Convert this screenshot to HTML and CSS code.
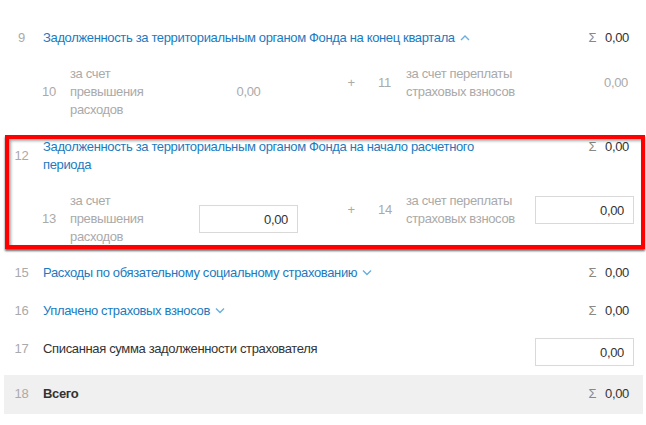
FILE: index.html
```html
<!DOCTYPE html>
<html lang="ru">
<head>
<meta charset="utf-8">
<title>Форма</title>
<link rel="stylesheet" href="styles.css">
</head>
<body>
<div class="form">
  <div class="row">
    <div class="num">9</div>
    <div class="label"><a class="link">Задолженность за территориальным органом Фонда на конец квартала<svg class="chev" width="10" height="7" viewBox="0 0 10 7"><path d="M1 6 L5 2 L9 6" fill="none" stroke="#6aaee0" stroke-width="1.4"/></svg></a></div>
    <div class="sum"><span class="sigma">Σ</span>0,00</div>
  </div>
  <div class="subrow">
    <div class="half">
      <div class="snum">10</div>
      <div class="slabel">за счет превышения расходов</div>
      <div class="val val-center">0,00</div>
    </div>
    <div class="half half-right">
      <div class="plus">+</div>
      <div class="snum">11</div>
      <div class="slabel">за счет переплаты страховых взносов</div>
      <div class="val val-right">0,00</div>
    </div>
  </div>

  <div class="marked">
    <div class="row row-top">
      <div class="num">12</div>
      <div class="label"><a class="link">Задолженность за территориальным органом Фонда на начало расчетного периода</a></div>
      <div class="sum"><span class="sigma">Σ</span>0,00</div>
    </div>
    <div class="subrow subrow-last">
      <div class="half">
        <div class="snum">13</div>
        <div class="slabel">за счет превышения расходов</div>
        <input class="field" type="text" value="0,00">
      </div>
      <div class="half half-right">
        <div class="plus">+</div>
        <div class="snum">14</div>
        <div class="slabel">за счет переплаты страховых взносов</div>
        <input class="field" type="text" value="0,00">
      </div>
    </div>
  </div>

  <div class="row">
    <div class="num">15</div>
    <div class="label"><a class="link">Расходы по обязательному социальному страхованию<svg class="chev" width="10" height="7" viewBox="0 0 10 7"><path d="M1 1.5 L5 5.5 L9 1.5" fill="none" stroke="#6aaee0" stroke-width="1.4"/></svg></a></div>
    <div class="sum"><span class="sigma">Σ</span>0,00</div>
  </div>
  <div class="row">
    <div class="num">16</div>
    <div class="label"><a class="link">Уплачено страховых взносов<svg class="chev" width="10" height="7" viewBox="0 0 10 7"><path d="M1 1.5 L5 5.5 L9 1.5" fill="none" stroke="#6aaee0" stroke-width="1.4"/></svg></a></div>
    <div class="sum"><span class="sigma">Σ</span>0,00</div>
  </div>
  <div class="row row-input">
    <div class="num">17</div>
    <div class="label plain">Списанная сумма задолженности страхователя</div>
    <input class="field field-main" type="text" value="0,00">
  </div>
  <div class="row row-total">
    <div class="num">18</div>
    <div class="label total">Всего</div>
    <div class="sum"><span class="sigma">Σ</span>0,00</div>
  </div>
</div>
</body>
</html>
```

FILE: styles.css
```css
html, body {
  margin: 0;
  padding: 0;
  background: #fff;
}
body {
  font-family: "Liberation Sans", Arial, sans-serif;
  font-size: 13px;
  line-height: 18px;
  letter-spacing: -0.35px;
  color: #333;
}
.form {
  margin: 0 3px 0 4px;
  padding-top: 19px;
}
.row {
  display: flex;
  align-items: flex-start;
  padding: 10px 9px 10px 0;
}
.num {
  width: 35px;
  flex: none;
  text-align: center;
  color: #aaa;
  margin-right: 4px;
}
.row-top .num {
  align-self: center;
}
.label {
  flex: 1;
  min-width: 0;
  padding-right: 40px;
}
.link {
  color: #1a7bc1;
  text-decoration: none;
}
.chev {
  margin-left: 5px;
  vertical-align: 1px;
}
.plain, .total {
  color: #333;
}
.total {
  font-weight: bold;
}
.sum {
  width: 99px;
  flex: none;
  text-align: right;
  padding-right: 5px;
  box-sizing: border-box;
  color: #333;
}
.sigma {
  color: #888;
  margin-right: 9px;
}
.subrow {
  display: flex;
  align-items: flex-start;
  padding: 8px 0 9px 38px;
  color: #aaa;
}
.subrow-last {
  padding-bottom: 8px;
}
.half {
  display: flex;
  align-items: center;
}
.half-right {
  margin-left: 26px;
}
.snum {
  width: 28px;
  flex: none;
}
.slabel {
  width: 112px;
  margin-right: 17px;
  flex: none;
}
.val {
  width: 99px;
  flex: none;
  box-sizing: border-box;
}
.val-center {
  text-align: center;
}
.val-right {
  text-align: right;
  padding-right: 6px;
}
.plus {
  width: 54px;
  text-align: center;
  flex: none;
}
.field {
  width: 99px;
  height: 28px;
  flex: none;
  box-sizing: border-box;
  border: 1px solid #d9d9d9;
  background: #fff;
  padding: 0 9px 0 4px;
  margin: 0;
  text-align: right;
  font-family: "Liberation Sans", Arial, sans-serif;
  font-size: 13px;
  letter-spacing: -0.35px;
  color: #333;
  outline: none;
}
.row-input {
  padding-bottom: 9px;
  padding-right: 9px;
}
.field-main {
  margin-top: -2px;
}
.row-total {
  background: #f0f0f0;
  padding-bottom: 11px;
}
.marked {
  position: relative;
}
.marked::after {
  content: "";
  position: absolute;
  left: 1px;
  right: -2px;
  top: 7px;
  bottom: 5px;
  border: 4px solid #ff0000;
  box-shadow: 0 2px 2px rgba(0, 0, 0, 0.6), inset 2px 2px 3px rgba(0, 0, 0, 0.35);
  pointer-events: none;
}
```
